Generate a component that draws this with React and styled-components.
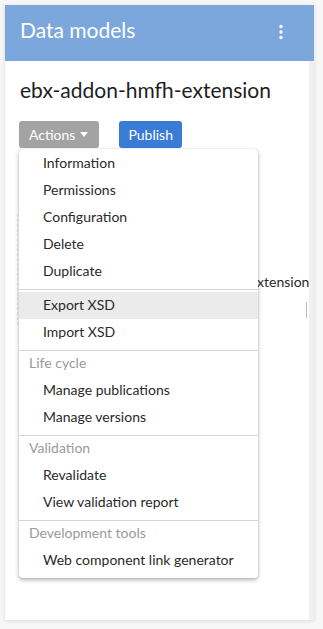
import React from 'react'
import styled, { createGlobalStyle } from 'styled-components'

const GlobalStyle = createGlobalStyle`
  html, body {
    margin: 0;
    padding: 0;
    background: #f7f7f7;
    font-family: Lato, "Open Sans", sans-serif;
  }
`

const menuGroups = [
  { items: ['Information', 'Permissions', 'Configuration', 'Delete', 'Duplicate'] },
  { items: ['Export XSD', 'Import XSD'], active: 'Export XSD' },
  { title: 'Life cycle', items: ['Manage publications', 'Manage versions'] },
  { title: 'Validation', items: ['Revalidate', 'View validation report'] },
  { title: 'Development tools', items: ['Web component link generator'] },
]

function KebabIcon() {
  return (
    <svg width="6" height="16" viewBox="0 0 6 16">
      <circle cx="3" cy="2.5" r="1.7" fill="#fff" />
      <circle cx="3" cy="8" r="1.7" fill="#fff" />
      <circle cx="3" cy="13.5" r="1.7" fill="#fff" />
    </svg>
  )
}

function App() {
  return (
    <Page>
      <GlobalStyle />
      <Card>
        <Header>
          <HeaderTitle>Data models</HeaderTitle>
          <KebabButton>
            <KebabIcon />
          </KebabButton>
        </Header>

        <Body>
          <Content>
            <Title>ebx-addon-hmfh-extension</Title>

            <Toolbar>
              <DropdownWrap>
                <Button $variant="gray">
                  Actions <Caret />
                </Button>

                <Menu>
                  {menuGroups.map((group, i) => (
                    <React.Fragment key={i}>
                      {i > 0 && <Separator />}
                      {group.title && <GroupTitle>{group.title}</GroupTitle>}
                      {group.items.map((item) => (
                        <MenuItem key={item} $active={item === group.active}>
                          {item}
                        </MenuItem>
                      ))}
                    </React.Fragment>
                  ))}
                </Menu>
              </DropdownWrap>

              <Button $variant="blue">Publish</Button>
            </Toolbar>

            {/* details panel, mostly covered by the open menu */}
            <Details>
              <DetailRow />
              <DetailRow />
              <DetailRow>
                <DetailValue>Extension</DetailValue>
              </DetailRow>
              <DetailRow $tall>
                <DetailValue>
                  <Resizer />
                </DetailValue>
              </DetailRow>
            </Details>
          </Content>
          <ScrollTrack />
        </Body>
      </Card>
    </Page>
  )
}

export default App

const Page = styled.div`
  padding: 5px 9px 9px 5px;
  width: 323px;
  height: 629px;
  box-sizing: border-box;
`

const Card = styled.div`
  width: 309px;
  height: 615px;
  display: flex;
  flex-direction: column;
  background: #fff;
  box-shadow: 0 1px 4px rgba(0, 0, 0, 0.12);
`

const Header = styled.div`
  height: 56px;
  flex-shrink: 0;
  box-sizing: border-box;
  background: #7ba7dd;
  display: flex;
  justify-content: space-between;
  align-items: flex-start;
  padding: 11px 30px 0 15px;
`

const HeaderTitle = styled.div`
  color: #fff;
  font-size: 21px;
  line-height: 28px;
`

const KebabButton = styled.div`
  display: flex;
  margin-top: 8px;
`

const Body = styled.div`
  flex: 1;
  display: flex;
  overflow: hidden;
`

const Content = styled.div`
  flex: 1;
  min-width: 0;
  padding: 15px 0 0 14px;
  overflow: hidden;
`

const ScrollTrack = styled.div`
  width: 5px;
  background: #f0f0f0;
`

const Title = styled.div`
  font-size: 21px;
  line-height: 28px;
  color: #1e1e1e;
  margin-left: 1px;
  white-space: nowrap;
`

const Toolbar = styled.div`
  display: flex;
  gap: 20px;
  margin-top: 17px;
`

const DropdownWrap = styled.div`
  position: relative;
`

const Button = styled.div`
  height: 27px;
  box-sizing: border-box;
  display: flex;
  align-items: center;
  gap: 5px;
  padding: 0 10px;
  border-radius: 3px;
  color: #fff;
  font-size: 14px;
  background: ${(p) => (p.$variant === 'blue' ? '#3a7bd5' : '#a3a3a3')};
  ${(p) => p.$variant === 'gray' && 'padding-right: 11px;'}
  ${(p) => p.$variant === 'blue' && 'padding: 0 9px;'}
`

const Caret = styled.span`
  width: 0;
  height: 0;
  border-left: 4.5px solid transparent;
  border-right: 4.5px solid transparent;
  border-top: 5px solid #fff;
`

const Menu = styled.div`
  position: absolute;
  top: 28px;
  left: 0;
  z-index: 10;
  width: 239px;
  background: #fff;
  border-radius: 4px;
  padding: 1px 0 4px;
  box-shadow: 0 0 1px rgba(0, 0, 0, 0.25), 0 2px 4px rgba(0, 0, 0, 0.3);
`

const MenuItem = styled.div`
  height: 27px;
  line-height: 26px;
  padding-left: 24px;
  font-size: 14px;
  color: #2a2a2a;
  white-space: nowrap;
  background: ${(p) => (p.$active ? '#ebebeb' : 'transparent')};
`

const GroupTitle = styled.div`
  height: 24px;
  line-height: 20px;
  padding-left: 10px;
  font-size: 14px;
  color: #9a9a9a;
`

const Separator = styled.div`
  height: 1px;
  background: #d4d4d4;
  margin: 4px 0 2px;
`

const Details = styled.div`
  margin-top: 66px;
  margin-left: -2px;
  border-left: 1px dashed #e0e0e0;
  display: flex;
  flex-direction: column;
`

const DetailRow = styled.div`
  display: grid;
  grid-template-columns: 231px 1fr;
  height: ${(p) => (p.$tall ? '30px' : '27px')};
  align-items: center;
  font-size: 14px;
  color: #2a2a2a;
`

const DetailValue = styled.div`
  grid-column: 2;
  white-space: nowrap;
  display: flex;
  align-items: center;
`

const Resizer = styled.div`
  margin-left: 57px;
  width: 2px;
  height: 16px;
  border-left: 1px solid #bbb;
  border-right: 1px solid #bbb;
`
